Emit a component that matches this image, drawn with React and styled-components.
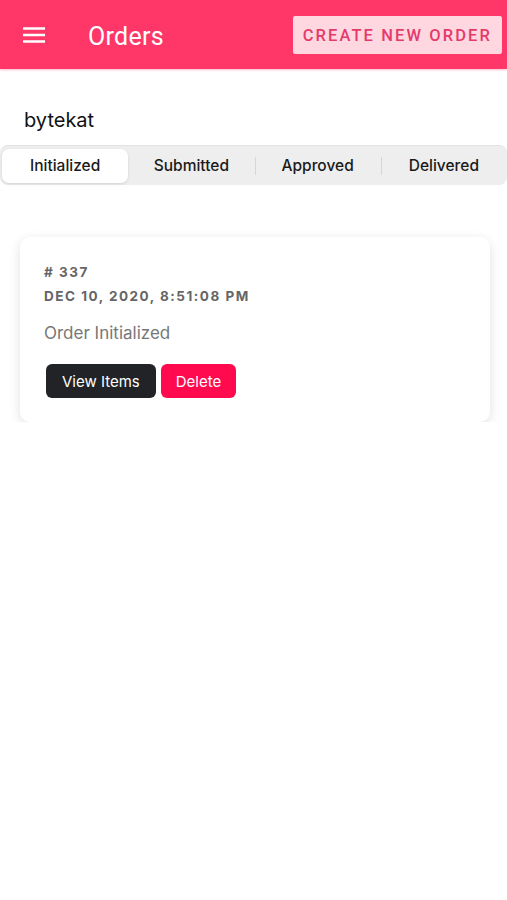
import styled, { createGlobalStyle } from 'styled-components'

const GlobalStyle = createGlobalStyle`
    body {
        margin: 0;
        background: #fff;
        font-family: Inter, "Noto Sans", sans-serif;
    }
`

const Header = styled.header`
    height: 69px;
    background: #fe3768;
    display: flex;
    align-items: center;
    padding: 1px 5px 0 22px;
    box-sizing: border-box;
    box-shadow: 0 1px 2px rgba(254, 55, 104, 0.35);
`

const MenuButton = styled.button`
    border: none;
    background: none;
    padding: 0;
    width: 24px;
    height: 24px;
    display: flex;
    align-items: center;
    justify-content: center;
    cursor: pointer;
`

const Title = styled.h1`
    margin: 3px 0 0 42px;
    flex: 1;
    font-family: Roboto, sans-serif;
    font-weight: 400;
    font-size: 25px;
    letter-spacing: 0.3px;
    color: #fff;
`

const CreateButton = styled.button`
    height: 38px;
    padding: 0 10px;
    border: none;
    border-radius: 2px;
    background: #ffd7e1;
    color: #e43b6b;
    font-family: Roboto, sans-serif;
    font-weight: 500;
    font-size: 16.5px;
    letter-spacing: 2.1px;
    cursor: pointer;
`

const Username = styled.div`
    padding: 39px 24px 0;
    font-size: 20px;
    color: #111;
    height: 37px;
`

const Segments = styled.div`
    display: flex;
    align-items: center;
    height: 39px;
    background: #eeeeef;
    border-radius: 8px;
    padding: 0 0 0 2px;
    border-top: 1px solid #e2e2e3;
`

const Segment = styled.div`
    flex: 1;
    height: 34px;
    display: flex;
    align-items: center;
    justify-content: center;
    font-size: 15.5px;
    font-weight: 500;
    color: #1a1a1a;
    border-radius: 7px;
    position: relative;
    background: ${p => (p.$active ? '#fff' : 'transparent')};
    box-shadow: ${p => (p.$active ? '0 1px 3px rgba(0,0,0,0.12)' : 'none')};

    &::before {
        content: '';
        display: ${p => (p.$divider ? 'block' : 'none')};
        position: absolute;
        left: 0;
        top: 8px;
        bottom: 8px;
        width: 1px;
        background: #d6d6d8;
    }
`

const List = styled.div`
    padding: 52px 17px 0 20px;
`

const Card = styled.div`
    background: #fff;
    border-radius: 10px;
    box-shadow: 0 3px 12px rgba(0, 0, 0, 0.12);
    padding: 26px 24px 24px;
`

const Meta = styled.div`
    font-size: 13.5px;
    font-weight: 700;
    letter-spacing: 1.5px;
    color: #666;
    line-height: 19px;
    margin-bottom: 5px;
`

const Status = styled.div`
    margin-top: 17px;
    font-size: 17px;
    color: #777;
`

const Actions = styled.div`
    display: flex;
    gap: 5px;
    margin-top: 21px;
    padding-left: 2px;
`

const ActionButton = styled.button`
    height: 34px;
    padding: 0 ${p => p.$pad}px;
    border: none;
    border-radius: 6px;
    background: ${p => p.$bg};
    color: #fff;
    font-family: Inter, sans-serif;
    font-size: 15px;
    cursor: pointer;
`

const MenuIcon = () => (
    <svg width="24" height="24" viewBox="0 0 24 24">
        <path d="M1 5.5h22M1 12h22M1 18.5h22" stroke="#fff" strokeWidth="2.4" />
    </svg>
)

const tabs = ['Initialized', 'Submitted', 'Approved', 'Delivered']

export default function App() {
    return (
        <>
            <GlobalStyle />
            <Header>
                <MenuButton>
                    <MenuIcon />
                </MenuButton>
                <Title>Orders</Title>
                <CreateButton>CREATE NEW ORDER</CreateButton>
            </Header>
            <Username>bytekat</Username>
            <Segments>
                {tabs.map((t, i) => (
                    <Segment key={t} $active={i === 0} $divider={i > 1}>
                        {t}
                    </Segment>
                ))}
            </Segments>
            <List>
                <Card>
                    <Meta># 337</Meta>
                    <Meta>DEC 10, 2020, 8:51:08 PM</Meta>
                    <Status>Order Initialized</Status>
                    <Actions>
                        <ActionButton $bg="#222327" $pad={16}>View Items</ActionButton>
                        <ActionButton $bg="#ff0a4f" $pad={15}>Delete</ActionButton>
                    </Actions>
                </Card>
            </List>
        </>
    )
}
